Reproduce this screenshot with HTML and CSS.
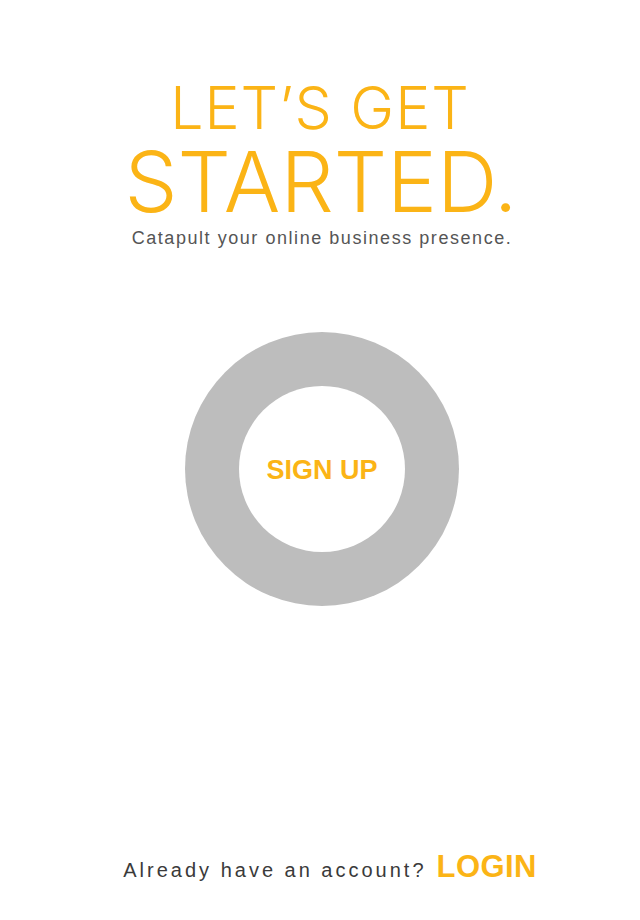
FILE: index.html
```html
<!DOCTYPE html>
<html>
<head>
<meta charset="utf-8">
<link rel="stylesheet" href="styles.css">
</head>
<body>
<main class="page">
  <header class="hero">
    <h1 class="title"><span class="line1">LET’S GET</span><span class="line2">STARTED.</span></h1>
    <p class="tagline">Catapult your online business presence.</p>
  </header>
  <div class="ring-wrap">
    <a class="ring" href="#"><span class="ring-inner">SIGN UP</span></a>
  </div>
  <footer class="footer">
    <span class="already">Already have an account?</span>
    <a class="login" href="#">LOGIN</a>
  </footer>
</main>
</body>
</html>
```
FILE: styles.css
```css
html, body {
  margin: 0;
  padding: 0;
  background: #ffffff;
}
.page {
  width: 640px;
  height: 920px;
  display: flex;
  flex-direction: column;
  align-items: center;
  font-family: "Liberation Sans", Arial, sans-serif;
}
.hero {
  padding-top: 78px;
  display: flex;
  flex-direction: column;
  align-items: center;
}
.title {
  margin: 0;
  display: flex;
  flex-direction: column;
  align-items: center;
  font-family: Inter, "Liberation Sans", sans-serif;
  font-weight: 300;
  color: #fbb416;
}
.line1 {
  font-size: 59px;
  line-height: 60px;
  letter-spacing: 1px;
}
.line2 {
  font-size: 84px;
  line-height: 88px;
  margin-left: 2px;
}
.tagline {
  margin: 2px 0 0 4px;
  font-size: 18px;
  line-height: 20px;
  letter-spacing: 1.55px;
  color: #555555;
}
.ring-wrap {
  margin-top: 84px;
  display: flex;
  justify-content: center;
  padding-left: 4px;
}
.ring {
  width: 274px;
  height: 274px;
  border-radius: 50%;
  background: #bdbdbd;
  display: flex;
  align-items: center;
  justify-content: center;
  text-decoration: none;
}
.ring-inner {
  width: 166px;
  height: 166px;
  border-radius: 50%;
  background: #ffffff;
  display: flex;
  align-items: center;
  justify-content: center;
  font-weight: 700;
  font-size: 27px;
  padding-top: 3px;
  box-sizing: border-box;
  color: #fbb416;
}
.footer {
  margin-top: auto;
  margin-bottom: 35px;
  display: flex;
  align-items: baseline;
  gap: 10px;
  padding-left: 20px;
}
.already {
  font-size: 20px;
  letter-spacing: 3px;
  color: #3a3a3a;
}
.login {
  font-size: 31px;
  font-weight: 700;
  letter-spacing: 0.4px;
  color: #fbb416;
  text-decoration: none;
}
```
